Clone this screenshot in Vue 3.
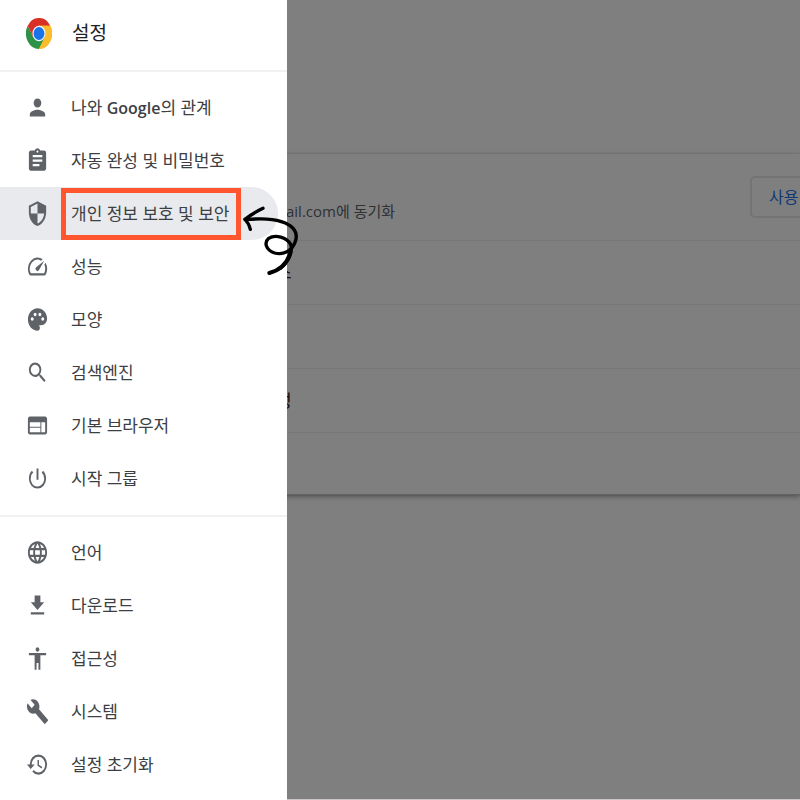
<script setup>
const primary = [
  { label: '나와 Google의 관계', strong: true, icon: 'M12 12c2.21 0 4-1.79 4-4s-1.79-4-4-4-4 1.79-4 4 1.79 4 4 4zm0 2c-2.67 0-8 1.34-8 4v2h16v-2c0-2.66-5.33-4-8-4z' },
  { label: '자동 완성 및 비밀번호', icon: 'M19 3h-4.18C14.4 1.84 13.3 1 12 1s-2.4.84-2.82 2H5c-1.1 0-2 .9-2 2v14c0 1.1.9 2 2 2h14c1.1 0 2-.9 2-2V5c0-1.1-.9-2-2-2zm-7 0c.55 0 1 .45 1 1s-.45 1-1 1-1-.45-1-1 .45-1 1-1zm2 14H7v-2h7v2zm3-4H7v-2h10v2zm0-4H7V7h10v2z' },
  { label: '개인 정보 보호 및 보안', selected: true, icon: 'M12 1 3 5v6c0 5.55 3.84 10.74 9 12 5.16-1.26 9-6.45 9-12V5l-9-4zm0 10.99h7c-.53 4.12-3.28 7.79-7 8.94V12H5V6.3l7-3.11v8.8z' },
  { label: '성능', icon: 'M20.38 8.57l-1.23 1.85a8 8 0 0 1-.22 7.58H5.07A8 8 0 0 1 15.58 6.85l1.85-1.23A10 10 0 0 0 3.35 19a2 2 0 0 0 1.72 1h13.85a2 2 0 0 0 1.74-1 10 10 0 0 0-.27-10.44zm-9.79 6.84a2 2 0 0 0 2.83 0l5.66-8.49-8.49 5.66a2 2 0 0 0 0 2.83z' },
  { label: '모양', icon: 'M12 2C6.49 2 2 6.49 2 12s4.49 10 10 10c1.38 0 2.5-1.12 2.5-2.5 0-.61-.23-1.2-.64-1.67-.08-.1-.13-.21-.13-.33 0-.28.22-.5.5-.5H16c3.31 0 6-2.69 6-6 0-4.96-4.49-9-10-9zm-5.500 11c-.83 0-1.500-.67-1.500-1.500S5.670 10 6.500 10 8 10.670 8 11.500 7.330 13 6.500 13zm3-4C8.670 9 8 8.330 8 7.500S8.670 6 9.500 6s1.500.67 1.500 1.500S10.330 9 9.500 9zm5 0c-.83 0-1.500-.67-1.500-1.500S13.670 6 14.500 6s1.500.67 1.500 1.500S15.330 9 14.500 9zm3 4c-.83 0-1.500-.67-1.500-1.500s.67-1.500 1.500-1.500 1.500.67 1.500 1.500-.67 1.500-1.500 1.500z' },
  { label: '검색엔진', icon: 'M15.500 14h-.79l-.28-.27A6.470 6.470 0 0 0 16 9.500 6.500 6.500 0 1 0 9.500 16c1.610 0 3.090-.59 4.230-1.570l.27.28v.79l5 4.990L20.490 19l-4.990-5zm-6 0C7.010 14 5 11.990 5 9.500S7.010 5 9.500 5 14 7.010 14 9.500 11.990 14 9.500 14z' },
  { label: '기본 브라우저', icon: 'M20 4H4c-1.100 0-1.990.9-1.990 2L2 18c0 1.100.9 2 2 2h16c1.100 0 2-.9 2-2V6c0-1.100-.9-2-2-2zm-5 14H4v-4h11v4zm0-5H4V9h11v4zm5 5h-4V9h4v9z' },
  { label: '시작 그룹', icon: 'M13 3h-2v10h2V3zm4.830 2.170l-1.420 1.420A6.920 6.920 0 0 1 19 12c0 3.870-3.130 7-7 7A6.995 6.995 0 0 1 7.580 6.580L6.170 5.170A8.932 8.932 0 0 0 3 12a9 9 0 0 0 18 0c0-2.740-1.230-5.180-3.170-6.830z' },
]
const secondary = [
  { label: '언어', icon: 'M11.990 2C6.470 2 2 6.480 2 12s4.470 10 9.990 10C17.520 22 22 17.520 22 12S17.520 2 11.990 2zm6.930 6h-2.950a15.650 15.650 0 0 0-1.380-3.560A8.030 8.030 0 0 1 18.920 8zM12 4.040c.83 1.200 1.480 2.530 1.910 3.960h-3.820c.43-1.430 1.080-2.760 1.910-3.960zM4.260 14C4.100 13.360 4 12.690 4 12s.1-1.360.26-2h3.380c-.08.66-.14 1.320-.14 2s.06 1.340.14 2H4.260zm.82 2h2.950c.32 1.250.78 2.450 1.380 3.560A7.987 7.987 0 0 1 5.080 16zm2.950-8H5.080a7.987 7.987 0 0 1 4.330-3.560A15.650 15.650 0 0 0 8.030 8zM12 19.960c-.83-1.200-1.480-2.530-1.910-3.960h3.820c-.43 1.430-1.080 2.760-1.910 3.960zM14.340 14H9.660c-.09-.66-.16-1.320-.16-2s.07-1.350.16-2h4.680c.09.65.16 1.320.16 2s-.07 1.340-.16 2zm.25 5.560c.6-1.110 1.060-2.310 1.380-3.560h2.950a8.030 8.030 0 0 1-4.330 3.560zM16.360 14c.08-.66.14-1.320.14-2s-.06-1.340-.14-2h3.380c.16.64.26 1.310.26 2s-.1 1.360-.26 2h-3.380z' },
  { label: '다운로드', icon: 'M19 9h-4V3H9v6H5l7 7 7-7zM5 18v2h14v-2H5z' },
  { label: '접근성', icon: 'M12 2c1.100 0 2 .9 2 2s-.9 2-2 2-2-.9-2-2 .9-2 2-2zm9 7h-6v13h-2v-6h-2v6H9V9H3V7h18v2z' },
  { label: '시스템', icon: 'M22.700 19l-9.100-9.100c.9-2.300.4-5-1.500-6.900-2-2-5-2.400-7.400-1.300L9 6 6 9 1.600 4.700C.4 7.100.9 10.100 2.900 12.100c1.900 1.900 4.600 2.400 6.900 1.500l9.100 9.100c.4.4 1 .4 1.400 0l2.300-2.300c.5-.4.5-1.100.1-1.400z' },
  { label: '설정 초기화', icon: 'M13 3a9 9 0 0 0-9 9H1l3.890 3.890.07.14L9 12H6c0-3.870 3.130-7 7-7s7 3.130 7 7-3.130 7-7 7c-1.930 0-3.680-.79-4.940-2.060l-1.420 1.420A8.954 8.954 0 0 0 13 21a9 9 0 0 0 0-18zm-1 5v5l4.280 2.540.72-1.210-3.500-2.080V8H12z' },
]
const groups = [primary, secondary]
</script>

<template>
  <div class="page">
    <main class="content">
      <section class="card">
        <div class="row account">
          <span class="sync">ail.com에 동기화</span>
          <button type="button" class="action">사용</button>
        </div>
        <div class="row">스</div>
        <div class="row"></div>
        <div class="row">성</div>
        <div class="row"></div>
      </section>
    </main>
    <div class="scrim"></div>

    <aside class="drawer">
      <header class="head">
        <svg class="logo" viewBox="0 0 48 48" preserveAspectRatio="none" aria-hidden="true">
          <path fill="#d93025" d="M24 24 3.200 12A24 24 0 0 1 44.800 12z" />
          <path fill="#fbbc2c" d="M24 24V12H44.800A24 24 0 0 1 24 48z" />
          <path fill="#2b9246" d="M3.200 12A24 24 0 0 0 24 48L34.400 30 24 24 13.600 30z" />
          <path fill="#d93025" d="M3.200 12 13.600 30 24 24V12z" />
          <path fill="#fbbc2c" d="M34.400 30 24 48A24 24 0 0 0 44.800 12H24z" />
          <circle cx="24" cy="24" r="12" fill="#f1f5fb" />
          <circle cx="24" cy="24" r="10" fill="#1a73e8" />
        </svg>
        <h1>설정</h1>
      </header>
      <nav>
        <ul v-for="(group, i) in groups" :key="i" class="group">
          <li v-for="item in group" :key="item.label" class="entry">
            <a href="#" class="item" :class="{ selected: item.selected }">
              <svg class="icon" viewBox="0 0 24 24" preserveAspectRatio="none" aria-hidden="true"><path :d="item.icon" /></svg>
              <span v-if="item.strong">나와 <b>Google</b>의 관계</span>
              <span v-else>{{ item.label }}</span>
            </a>
            <template v-if="item.selected">
              <span class="frame"></span>
              <svg class="arrow" viewBox="0 0 240 285" aria-hidden="true">
                <path d="M99 55C80 64 60 76 45 88C53 96 58 106 61 118" />
                <path d="M45 88C90 86 132 84 166 99C194 112 205 132 195 157C185 184 160 195 134 189C108 181 101 158 116 145C136 132 170 142 182 163C190 185 174 217 151 235" />
                <path class="tail" d="M181 188C174 213 155 239 118 249" />
              </svg>
            </template>
          </li>
        </ul>
      </nav>
    </aside>
  </div>
</template>

<style>
body {
  margin: 0;
}
</style>

<style scoped>
* {
  box-sizing: border-box;
}
.page {
  position: relative;
  display: grid;
  min-height: 100vh;
  overflow: hidden;
  background: #fff;
  color: #202124;
  font-family: "Open Sans", "Noto Sans CJK KR", sans-serif;
  font-size: 17px;
  line-height: 24px;
}
.content,
.scrim,
.drawer {
  grid-area: 1 / 1;
}
.content {
  min-width: 0;
  padding-top: 154px;
  border-bottom: 2px solid #cdc6c6;
}
.card {
  box-shadow: 0 0 3px rgba(60, 64, 67, 0.2), 0 2px 5px rgba(60, 64, 67, 0.4);
}
.row {
  display: flex;
  align-items: center;
  height: 64px;
  padding-left: 276px;
  border-bottom: 1px solid #f0f0f0;
}
.row:last-child {
  height: 62px;
  border-bottom: 1px solid #c4c4c4;
}
.account {
  height: 87px;
  padding-left: 286px;
}
.sync {
  padding-top: 28px;
  color: #5f6368;
  font-size: 15px;
}
.action {
  flex: none;
  width: 70px;
  height: 42px;
  margin-left: auto;
  margin-right: -20px;
  padding: 0 17px;
  border: 2px solid #e8e9eb;
  border-radius: 5px;
  background: transparent;
  color: #1a73e8;
  font: inherit;
  font-size: 16px;
  text-align: left;
}
.scrim {
  margin-bottom: 2px;
  background: rgba(0, 0, 0, 0.5);
}
.drawer {
  width: 287px;
  background: #fff;
  z-index: 1;
}
.head {
  display: flex;
  align-items: center;
  gap: 20px;
  height: 72px;
  padding: 0 26px 4px;
  border-bottom: 2px solid #f1f1f2;
}
.logo {
  width: 26px;
  height: 31px;
}
h1 {
  margin: 0;
  font-size: 19px;
  font-weight: 400;
}
.group {
  margin: 0;
  padding: 9px 0 10px;
  list-style: none;
}
.group + .group {
  border-top: 2px solid #f1f1f2;
}
.entry {
  position: relative;
}
.item {
  display: flex;
  align-items: center;
  gap: 22px;
  height: 53px;
  margin-right: 9px;
  padding-left: 26px;
  border-radius: 0 27px 27px 0;
  color: #3c4043;
  text-decoration: none;
  white-space: nowrap;
}
.item b {
  font-size: 16px;
  font-weight: 600;
}
.selected {
  background: #e8eaed;
}
.icon {
  width: 23px;
  height: 27px;
  fill: #5f6368;
}
.frame {
  position: absolute;
  inset: 1px 46px 0 61px;
  border: 5px solid #ff5630;
}
.arrow {
  position: absolute;
  top: 3px;
  left: 230px;
  width: 80px;
  height: 95px;
  fill: none;
  stroke: #000;
  stroke-width: 10;
  stroke-linecap: round;
  stroke-linejoin: round;
}
.tail {
  stroke-width: 12;
}
</style>
